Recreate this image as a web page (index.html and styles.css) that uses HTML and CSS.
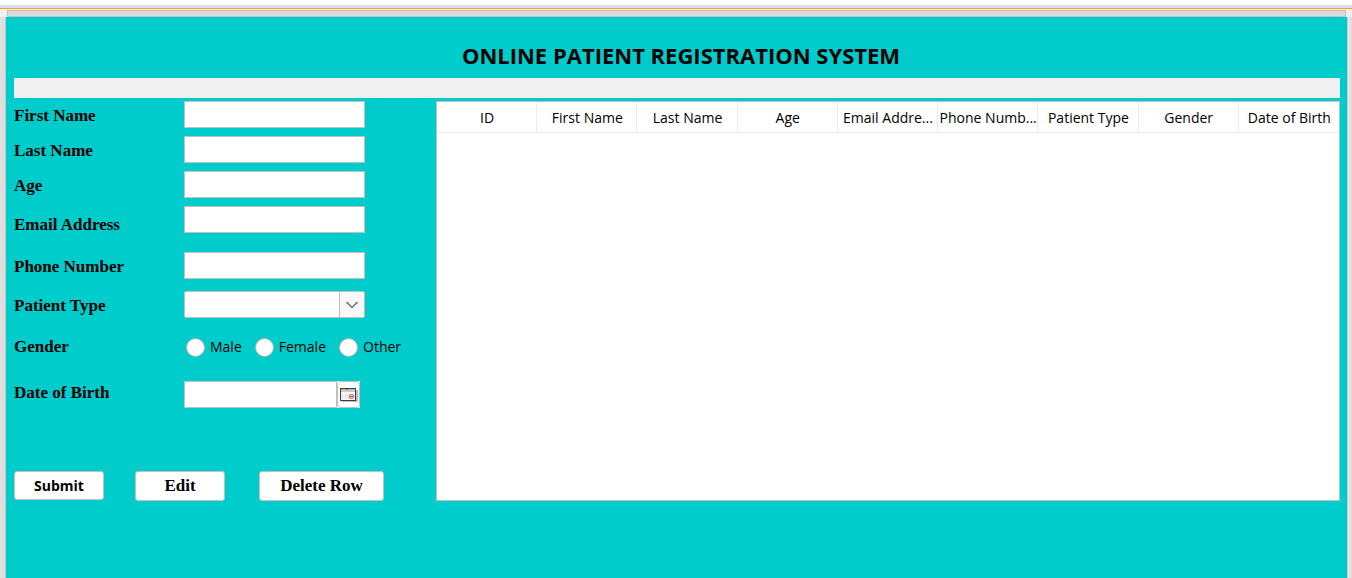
FILE: index.html
```html
<!DOCTYPE html>
<html lang="en">
<head>
<meta charset="utf-8">
<title>Online Patient Registration System</title>
<link rel="stylesheet" href="styles.css">
</head>
<body>
<div class="topline"></div>
<div class="ruler"></div>
<div class="workspace">
  <main class="panel">
    <h1 class="title">ONLINE PATIENT REGISTRATION SYSTEM</h1>
    <div class="band"></div>
    <div class="content">
      <form class="form">
        <div class="fields">
          <label class="label" for="first">First Name</label>
          <input class="box" id="first" type="text">
          <label class="label" for="last">Last Name</label>
          <input class="box" id="last" type="text">
          <label class="label" for="age">Age</label>
          <input class="box" id="age" type="text">
          <label class="label label-low" for="email">Email Address</label>
          <input class="box" id="email" type="text">
          <label class="label" for="phone">Phone Number</label>
          <input class="box" id="phone" type="text">
          <label class="label" for="type">Patient Type</label>
          <div class="combo">
            <select class="combo-select" id="type"><option></option></select>
            <svg class="combo-arrow" viewBox="0 0 24 25" aria-hidden="true"><path d="M6.500 10l5.500 5.500 5.500-5.500" fill="none" stroke="#6e6e6e" stroke-width="1.500"/></svg>
          </div>
          <span class="label label-compact" id="gender">Gender</span>
          <div class="radios" role="radiogroup" aria-labelledby="gender">
            <label class="choice"><input class="radio" type="radio" name="gender">Male</label>
            <label class="choice"><input class="radio" type="radio" name="gender">Female</label>
            <label class="choice"><input class="radio" type="radio" name="gender">Other</label>
          </div>
          <label class="label label-compact" for="dob">Date of Birth</label>
          <div class="date">
            <input class="box" id="dob" type="text">
            <button class="date-button" type="button" aria-label="Choose date">
              <svg class="date-icon" viewBox="0 0 18 14" shape-rendering="crispEdges" aria-hidden="true">
                <path d="M2 2h16v12H2z" fill="#bdbdbd"/>
                <path d="M0 0h16v13H0z" fill="#3c3c40"/>
                <path d="M1 1h5v1H1z" fill="#f0b04c"/>
                <path d="M6 1h2v1H6z" fill="#777"/>
                <path d="M8 1h7v1H8z" fill="#9dc3ee"/>
                <path d="M1 2h14v2H1z" fill="#c9c9c9"/>
                <path d="M1 4h14v8H1z" fill="#f6f6f6"/>
                <path d="M2 6h1v5H2zM5 6h1v5H5zM8 6h1v5H8z" fill="#dcdcdc"/>
                <path d="M10 6h3v1h-3zM9 7h1v3H9zM13 7h1v3h-1zM10 10h3v1h-3z" fill="#e46a6a"/>
                <path d="M10 7h3v3h-3z" fill="#f7c9c9"/>
                <path d="M10 8h3v1h-3z" fill="#d94444"/>
              </svg>
            </button>
          </div>
        </div>
        <div class="actions">
          <button class="button button-submit" type="button">Submit</button>
          <button class="button" type="button">Edit</button>
          <button class="button button-wide" type="button">Delete Row</button>
        </div>
      </form>
      <div class="table-pane">
        <table class="table">
          <thead>
            <tr><th>ID</th><th>First Name</th><th>Last Name</th><th>Age</th><th>Email Addre...</th><th>Phone Numb...</th><th>Patient Type</th><th>Gender</th><th>Date of Birth</th></tr>
          </thead>
        </table>
      </div>
    </div>
  </main>
</div>
</body>
</html>
```
FILE: styles.css
```css
* {
  box-sizing: border-box;
}
body {
  margin: 0;
  min-height: 100vh;
  display: flex;
  flex-direction: column;
  background: #f0f0f0;
  color: #000;
  font: 14px/20px "Open Sans", "Noto Sans", sans-serif;
}
.topline {
  height: 9px;
  background: #fff;
  border-bottom: 1px solid #ffa500;
  box-shadow: inset 0 -3px #dedefa;
}
.ruler {
  height: 7px;
  margin: 1px 6px 0 7px;
  background: #dadada;
  border: 1px solid #c0c0c0;
}
.workspace {
  flex: 1;
  display: flex;
  padding: 0 5px 0 6px;
  background: #dfdfdf;
}
.panel {
  flex: 1;
  padding: 24px 7px 0 8px;
  background: #00cccc;
  box-shadow: -1px 0 #c8c8c8, 1px 0 #c8c8c8, 2px 0 #f0f0f0;
}
.title {
  margin: 0 0 9px;
  padding-left: 8px;
  text-align: center;
  font-size: 22px;
  line-height: 28px;
}
.band {
  height: 20px;
  background: #f0f0f0;
}
.content {
  display: flex;
  align-items: flex-start;
  padding-top: 3px;
}
.form {
  flex: none;
  width: 422px;
}
.fields {
  display: grid;
  grid-template-columns: 170px 1fr;
  grid-template-rows: 35px 35px 35px 46px 39px 44px 46px 90px;
  align-items: start;
}
.label {
  font: bold 17px/29px "Liberation Serif", "Times New Roman", serif;
}
.label-low {
  line-height: 38px;
}
.label-compact {
  line-height: 24px;
}
.box {
  width: 181px;
  height: 27px;
  padding: 2px 6px;
  border: 1px solid #c0c0c0;
  background: #fff;
  font: inherit;
}
.combo {
  position: relative;
  width: 181px;
  height: 27px;
}
.combo-select {
  appearance: none;
  width: 100%;
  height: 100%;
  padding: 0 30px 0 6px;
  border: 1px solid #c0c0c0;
  border-radius: 2px;
  background: #fff;
  font: inherit;
}
.combo-arrow {
  position: absolute;
  top: 1px;
  right: 1px;
  width: 25px;
  height: 25px;
  border-left: 1px solid #c0c0c0;
  background: #f9f9f9;
  pointer-events: none;
}
.radios {
  display: flex;
  gap: 13px;
  padding-left: 2px;
}
.choice {
  display: flex;
  align-items: center;
  gap: 5px;
  height: 24px;
}
.radio {
  appearance: none;
  width: 19px;
  height: 19px;
  margin: 0;
  border: 1px solid #b4b4b4;
  border-radius: 50%;
  background: #fff;
}
.radio:checked {
  box-shadow: inset 0 0 0 5px #fff;
  background: #333;
}
.date {
  display: flex;
  width: 176px;
  background: #fff;
}
.date .box {
  flex: 1;
  min-width: 0;
}
.date-button {
  width: 23px;
  height: 27px;
  padding: 0;
  display: flex;
  align-items: center;
  justify-content: center;
  border: 1px solid #c0c0c0;
  border-radius: 3px;
  background: #fff;
}
.date-icon {
  width: 18px;
  height: 14px;
}
.actions {
  display: flex;
  align-items: flex-start;
}
.button {
  width: 90px;
  height: 30px;
  margin-right: 34px;
  padding: 0;
  border: 1px solid #c0c0c0;
  border-radius: 3px;
  background: #fff;
  color: #000;
  font: bold 17px/26px "Liberation Serif", "Times New Roman", serif;
}
.button-submit {
  height: 29px;
  margin-right: 31px;
  font: bold 14px/20px "Open Sans", "Noto Sans", sans-serif;
}
.button-wide {
  width: 125px;
  margin-right: 0;
}
.table-pane {
  flex: 1;
  min-width: 0;
  height: 400px;
  border: 1px solid #c0c0c0;
  background: #fff;
}
.table {
  width: 100%;
  table-layout: fixed;
  border-collapse: separate;
  border-spacing: 0;
}
.table th {
  height: 31px;
  padding: 1px 0 0 1px;
  border-right: 1px solid #ebebeb;
  border-bottom: 1px solid #ebebeb;
  font-weight: normal;
  white-space: nowrap;
}
.table th:last-child {
  border-right: 0;
}
```
